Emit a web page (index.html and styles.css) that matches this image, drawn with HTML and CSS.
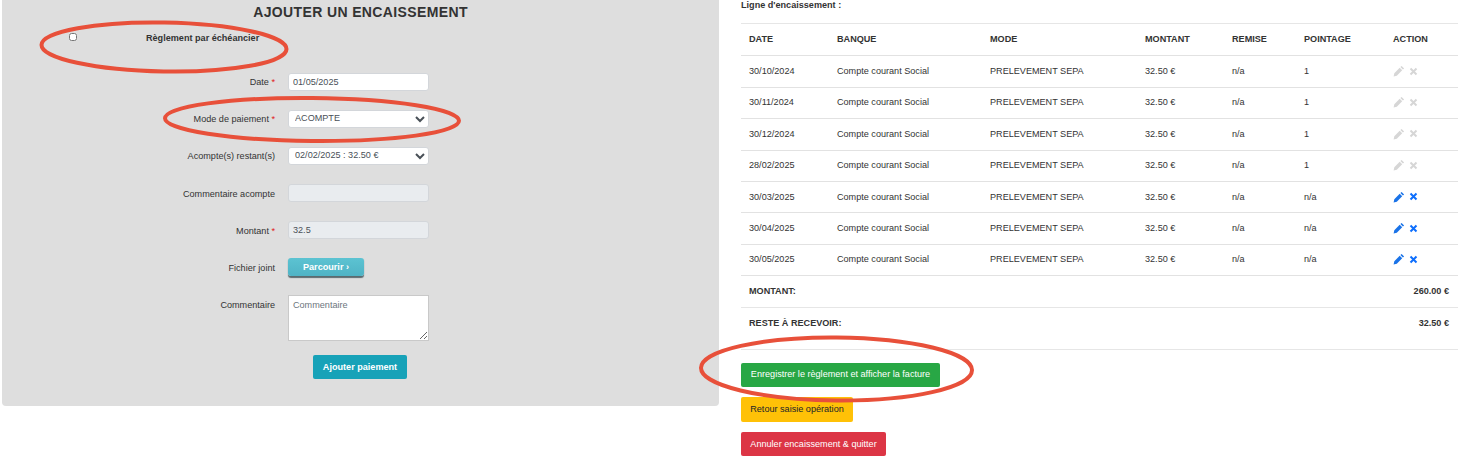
FILE: index.html
```html
<!DOCTYPE html>
<html lang="fr">
<head>
<meta charset="utf-8">
<title>Ajouter un encaissement</title>
<link rel="stylesheet" href="styles.css">
</head>
<body>
<div class="page">
  <section class="panel">
    <h2 class="panel-title">AJOUTER UN ENCAISSEMENT</h2>
    <div class="check-row">
      <input class="check" type="checkbox">
      <label class="check-label">Règlement par échéancier</label>
    </div>
    <div class="form-rows">
      <div class="row"><label class="lbl">Date <span class="req">*</span></label><input class="field" type="text" value="01/05/2025"></div>
      <div class="row"><label class="lbl">Mode de paiement <span class="req">*</span></label><select class="field sel"><option>ACOMPTE</option></select></div>
      <div class="row"><label class="lbl">Acompte(s) restant(s)</label><select class="field sel"><option>02/02/2025 : 32.50 €</option></select></div>
      <div class="row"><label class="lbl">Commentaire acompte</label><input class="field off" type="text" disabled></div>
      <div class="row"><label class="lbl">Montant <span class="req">*</span></label><input class="field off" type="text" value="32.5" disabled></div>
      <div class="row"><label class="lbl">Fichier joint</label><div><button class="browse" type="button">Parcourir ›</button></div></div>
      <div class="row row-area"><label class="lbl">Commentaire</label><textarea class="area" placeholder="Commentaire"></textarea></div>
    </div>
    <div class="submit-row"><button class="btn btn-teal" type="button">Ajouter paiement</button></div>
  </section>

  <section class="side">
    <div class="side-title">Ligne d'encaissement :</div>
    <table class="grid">
      <colgroup>
        <col class="c1"><col class="c2"><col class="c3"><col class="c4"><col class="c5"><col class="c6"><col class="c7">
      </colgroup>
      <thead>
        <tr><th>DATE</th><th>BANQUE</th><th>MODE</th><th>MONTANT</th><th>REMISE</th><th>POINTAGE</th><th>ACTION</th></tr>
      </thead>
      <tbody>
        <tr><td>30/10/2024</td><td>Compte courant Social</td><td>PRELEVEMENT SEPA</td><td>32.50 €</td><td>n/a</td><td>1</td><td><span class="acts muted"><svg class="ic" viewBox="0 0 12 12"><path d="M8.6.9l2.5 2.5-1.2 1.2-2.5-2.5zM6.7 2.8l2.5 2.5-5.4 5.4-3.2.7.7-3.2z"/></svg><svg class="ic" viewBox="0 0 12 12"><path d="M2 2l8 8M10 2l-8 8"/></svg></span></td></tr>
        <tr><td>30/11/2024</td><td>Compte courant Social</td><td>PRELEVEMENT SEPA</td><td>32.50 €</td><td>n/a</td><td>1</td><td><span class="acts muted"><svg class="ic" viewBox="0 0 12 12"><path d="M8.6.9l2.5 2.5-1.2 1.2-2.5-2.5zM6.7 2.8l2.5 2.5-5.4 5.4-3.2.7.7-3.2z"/></svg><svg class="ic" viewBox="0 0 12 12"><path d="M2 2l8 8M10 2l-8 8"/></svg></span></td></tr>
        <tr><td>30/12/2024</td><td>Compte courant Social</td><td>PRELEVEMENT SEPA</td><td>32.50 €</td><td>n/a</td><td>1</td><td><span class="acts muted"><svg class="ic" viewBox="0 0 12 12"><path d="M8.6.9l2.5 2.5-1.2 1.2-2.5-2.5zM6.7 2.8l2.5 2.5-5.4 5.4-3.2.7.7-3.2z"/></svg><svg class="ic" viewBox="0 0 12 12"><path d="M2 2l8 8M10 2l-8 8"/></svg></span></td></tr>
        <tr><td>28/02/2025</td><td>Compte courant Social</td><td>PRELEVEMENT SEPA</td><td>32.50 €</td><td>n/a</td><td>1</td><td><span class="acts muted"><svg class="ic" viewBox="0 0 12 12"><path d="M8.6.9l2.5 2.5-1.2 1.2-2.5-2.5zM6.7 2.8l2.5 2.5-5.4 5.4-3.2.7.7-3.2z"/></svg><svg class="ic" viewBox="0 0 12 12"><path d="M2 2l8 8M10 2l-8 8"/></svg></span></td></tr>
        <tr><td>30/03/2025</td><td>Compte courant Social</td><td>PRELEVEMENT SEPA</td><td>32.50 €</td><td>n/a</td><td>n/a</td><td><span class="acts live"><svg class="ic" viewBox="0 0 12 12"><path d="M8.6.9l2.5 2.5-1.2 1.2-2.5-2.5zM6.7 2.8l2.5 2.5-5.4 5.4-3.2.7.7-3.2z"/></svg><svg class="ic" viewBox="0 0 12 12"><path d="M2 2l8 8M10 2l-8 8"/></svg></span></td></tr>
        <tr><td>30/04/2025</td><td>Compte courant Social</td><td>PRELEVEMENT SEPA</td><td>32.50 €</td><td>n/a</td><td>n/a</td><td><span class="acts live"><svg class="ic" viewBox="0 0 12 12"><path d="M8.6.9l2.5 2.5-1.2 1.2-2.5-2.5zM6.7 2.8l2.5 2.5-5.4 5.4-3.2.7.7-3.2z"/></svg><svg class="ic" viewBox="0 0 12 12"><path d="M2 2l8 8M10 2l-8 8"/></svg></span></td></tr>
        <tr><td>30/05/2025</td><td>Compte courant Social</td><td>PRELEVEMENT SEPA</td><td>32.50 €</td><td>n/a</td><td>n/a</td><td><span class="acts live"><svg class="ic" viewBox="0 0 12 12"><path d="M8.6.9l2.5 2.5-1.2 1.2-2.5-2.5zM6.7 2.8l2.5 2.5-5.4 5.4-3.2.7.7-3.2z"/></svg><svg class="ic" viewBox="0 0 12 12"><path d="M2 2l8 8M10 2l-8 8"/></svg></span></td></tr>
      </tbody>
    </table>
    <div class="total"><span>MONTANT:</span><span>260.00 €</span></div>
    <div class="total total-last"><span>RESTE À RECEVOIR:</span><span>32.50 €</span></div>
    <div class="actions">
      <button class="btn btn-green" type="button">Enregistrer le règlement et afficher la facture</button>
      <button class="btn btn-yellow" type="button">Retour saisie opération</button>
      <button class="btn btn-red" type="button">Annuler encaissement &amp; quitter</button>
    </div>
  </section>
</div>
<svg class="marks" viewBox="0 0 1471 460" aria-hidden="true">
  <ellipse cx="164" cy="47" rx="122.500" ry="24.500" transform="rotate(1 164 47)"/>
  <ellipse cx="312" cy="119.500" rx="147" ry="21.500" transform="rotate(0.5 312 119.500)"/>
  <ellipse cx="836.500" cy="369" rx="135.500" ry="31.500" transform="rotate(0.5 836.500 369)"/>
</svg>
</body>
</html>
```
FILE: styles.css
```css
* { box-sizing: border-box; }
html, body { margin: 0; padding: 0; background: #fff; }
body {
  position: relative;
  width: 1471px;
  height: 460px;
  overflow: hidden;
  font-family: "Liberation Sans", Arial, sans-serif;
  font-size: 9.1px;
  color: #212529;
}
.page { display: flex; align-items: flex-start; padding-left: 2px; }

/* left panel */
.panel {
  width: 717px;
  height: 406px;
  background: #dedede;
  border-radius: 0 0 4px 4px;
  flex: none;
}
.panel-title {
  margin: 0;
  height: 24px;
  line-height: 24px;
  text-align: center;
  font-size: 14px;
  font-weight: 700;
  letter-spacing: 0.37px;
  color: #333;
}
.check-row { display: flex; align-items: flex-start; height: 48px; padding: 9px 0 0 67px; }
.check {
  width: 8px;
  height: 8px;
  margin: 0;
  flex: none;
}
.check-label {
  margin-left: 69px;
  line-height: 10px;
  font-weight: 700;
  color: #333;
}
.form-rows { display: flex; flex-direction: column; gap: 19.2px; }
.row {
  display: grid;
  grid-template-columns: 273px 141px;
  column-gap: 13px;
  align-items: center;
  height: 18px;
}
.row-area { height: 46px; align-items: start; }
.lbl { text-align: right; color: #333; line-height: 18px; padding-top: 1px; }
.req { color: #e02020; }
.field {
  width: 141px;
  height: 18px;
  padding: 0 4px;
  font: 9.1px "Liberation Sans", Arial, sans-serif;
  color: #495057;
  background: #fff;
  border: 1px solid #d3d6da;
  border-radius: 3px;
}
.sel { padding: 0 2px 1px; }
.off { background: #e9ecef; color: #495057; }
.browse {
  display: block;
  width: 76px;
  height: 18px;
  padding: 0 0 1px;
  border: 0;
  border-radius: 3px;
  background: linear-gradient(#5cc3d2, #4fb3c5);
  box-shadow: 0 1.5px 1px #5b6b70;
  color: #fff;
  font: 700 9.1px "Liberation Sans", Arial, sans-serif;
}
.area {
  display: block;
  width: 141px;
  height: 46px;
  padding: 4px;
  font: 9.1px "Liberation Sans", Arial, sans-serif;
  border: 1px solid #c9c9c9;
  background: #fff;
  resize: both;
}
.area::placeholder { color: #6c757d; opacity: 1; }
.submit-row { display: flex; justify-content: center; margin-top: 14px; padding-right: 1px; }

/* buttons */
.btn {
  display: block;
  height: 24px;
  padding: 0 8px 1px;
  border: 0;
  border-radius: 2px;
  font: 9.1px "Liberation Sans", Arial, sans-serif;
  white-space: nowrap;
}
.btn-teal { width: 94px; background: #17a2b8; color: #fff; font-weight: 700; padding: 0; }
.btn-green { width: 199px; background: #28a745; color: #fff; }
.btn-yellow { width: 112px; height: 24.5px; background: #ffc107; color: #212529; }
.btn-red { width: 145px; background: #dc3545; color: #fff; }

/* right column */
.side { width: 717px; margin-left: 22px; flex: none; }
.side-title { height: 23px; line-height: 11px; font-weight: 700; color: #333; }
.grid {
  width: 717px;
  table-layout: fixed;
  border-collapse: collapse;
  border-top: 1px solid #e6e6e6;
}
.c1 { width: 88px; }
.c2 { width: 153px; }
.c3 { width: 155px; }
.c4 { width: 87px; }
.c5 { width: 72px; }
.c6 { width: 89px; }
.c7 { width: 73px; }
.grid th, .grid td {
  height: 31.4px;
  padding: 0 0 1px 8px;
  text-align: left;
  vertical-align: middle;
  border-bottom: 1px solid #e2e2e2;
  color: #333;
}
.grid th { font-weight: 700; height: 32.4px; }
.acts { display: inline-flex; align-items: center; gap: 4px; vertical-align: middle; }
.ic { width: 12px; height: 12px; display: block; }
.ic:last-child { width: 9px; height: 9px; }
.ic path { stroke: none; }
.ic:last-child path { fill: none; stroke-width: 2.6; }
.muted .ic path { fill: #d6d6d6; }
.muted .ic:last-child path { fill: none; stroke: #d6d6d6; }
.live .ic path { fill: #1a73e8; }
.live .ic:last-child path { fill: none; stroke: #0d6efd; }
.total {
  display: flex;
  justify-content: space-between;
  height: 31.6px;
  padding: 0 9px 0 8px;
  line-height: 31px;
  font-weight: 700;
  color: #333;
  border-bottom: 1px solid #e6e6e6;
}
.total-last { height: 42px; }
.actions { display: flex; flex-direction: column; align-items: flex-start; gap: 10.5px; margin-top: 13px; }

/* hand-drawn annotation layer */
.marks {
  position: absolute;
  left: 0;
  top: 0;
  width: 1471px;
  height: 460px;
  pointer-events: none;
}
.marks ellipse { fill: none; stroke: #e8503a; stroke-width: 4; }
```
